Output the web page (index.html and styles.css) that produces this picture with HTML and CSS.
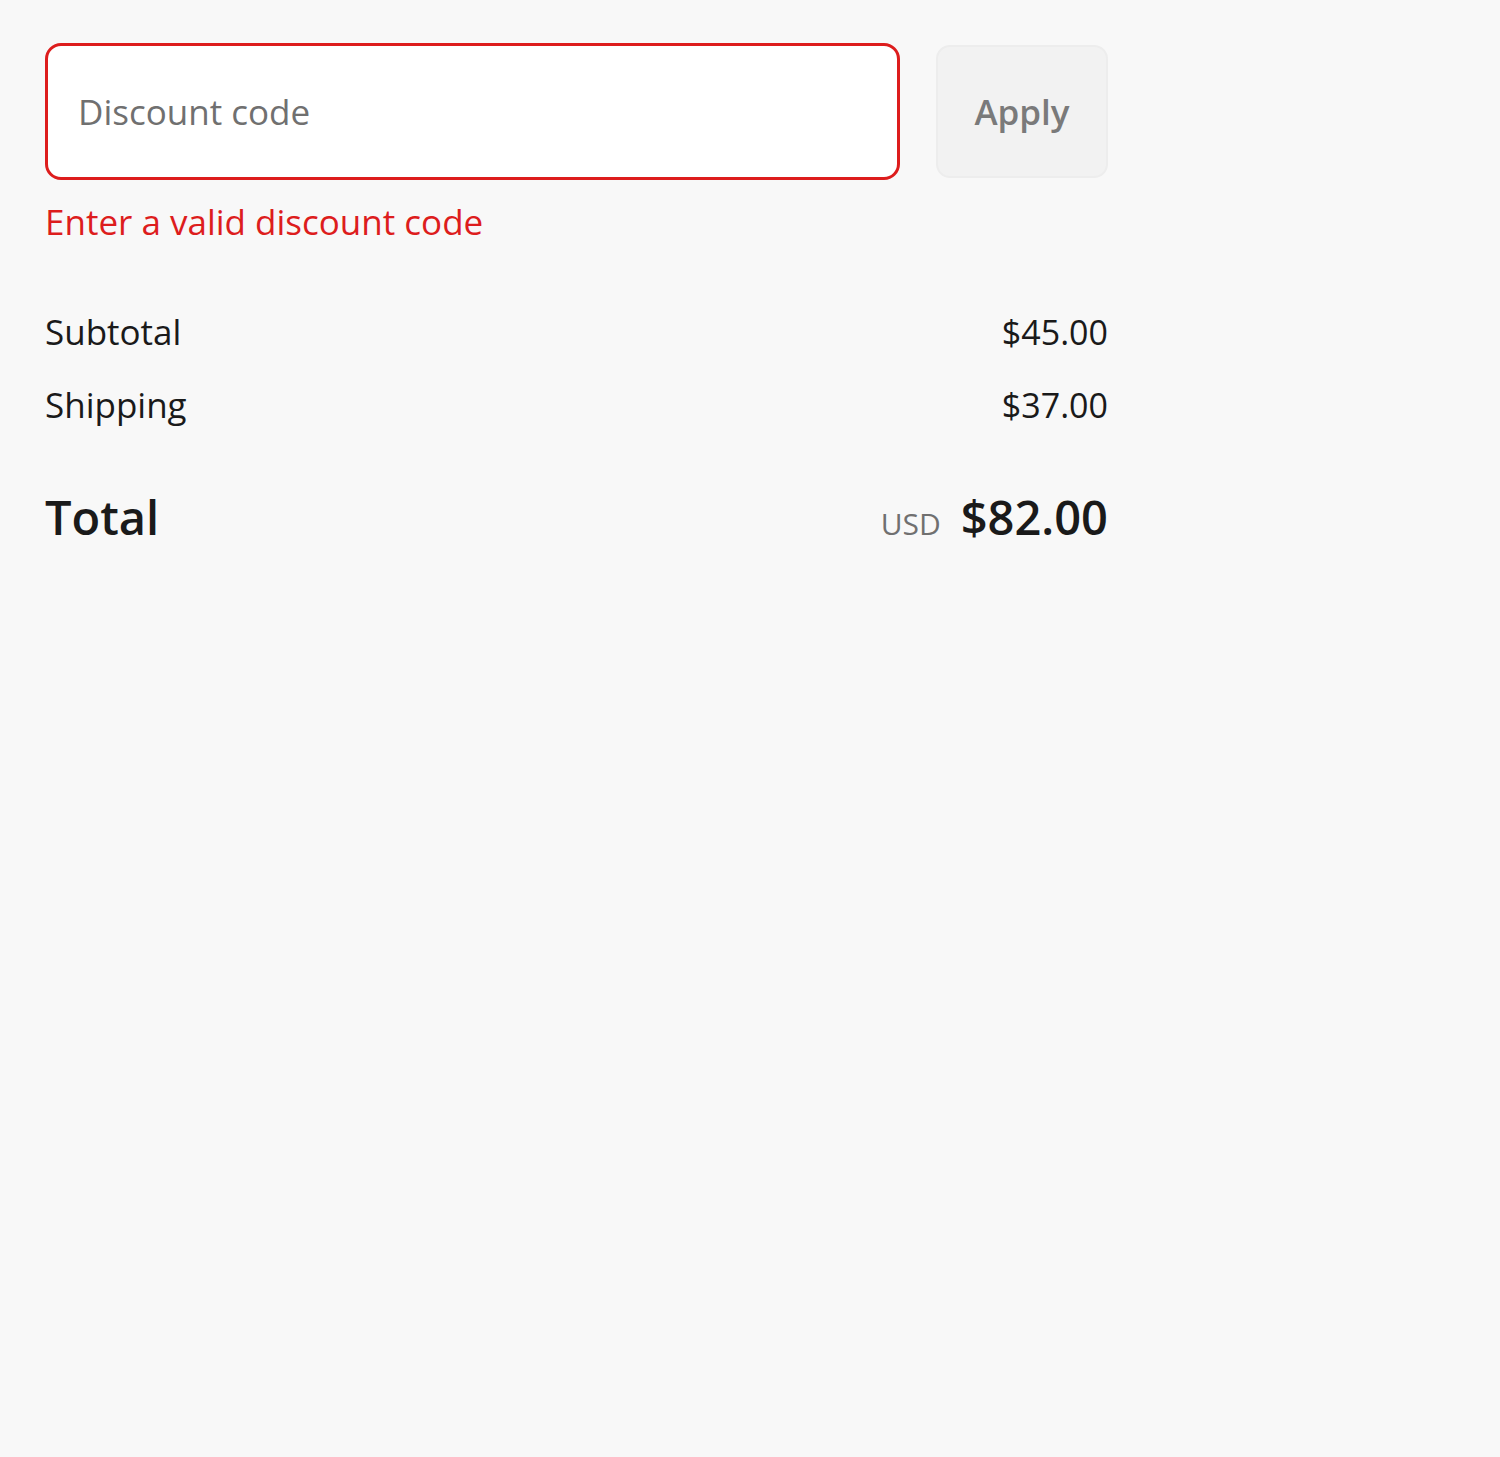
FILE: index.html
```html
<!DOCTYPE html>
<html lang="en">
<head>
    <meta charset="UTF-8">
    <meta name="viewport" content="width=device-width, initial-scale=1.0">
    <title>Order summary</title>
    <link rel="stylesheet" href="styles.css">
</head>
<body>
    <div class="summary">
        <form class="discount-form">
            <div class="discount-row">
                <input type="text" class="discount-input" placeholder="Discount code">
                <button type="submit" class="apply-btn" disabled>Apply</button>
            </div>
            <div class="field-error">Enter a valid discount code</div>
        </form>

        <div class="totals">
            <div class="line">
                <span>Subtotal</span>
                <span class="price">$45.00</span>
            </div>
            <div class="line">
                <span>Shipping</span>
                <span class="price">$37.00</span>
            </div>
            <div class="line total">
                <span>Total</span>
                <span class="amount"><span class="currency">USD</span>$82.00</span>
            </div>
        </div>
    </div>
</body>
</html>
```

FILE: styles.css
```css
body {
    margin: 0;
    background-color: #f8f8f8;
    font-family: "Open Sans", "Noto Sans", Arial, sans-serif;
    color: #1a1a1a;
}
.summary {
    width: 1063px;
    padding: 43px 0 0 45px;
}
.discount-row {
    display: flex;
    gap: 36px;
    align-items: center;
}
.discount-input {
    flex: 1;
    height: 137px;
    box-sizing: border-box;
    padding: 0 30px;
    border: 3px solid #dd1d1d;
    border-radius: 16px;
    background-color: white;
    font-family: inherit;
    font-size: 35px;
    color: #1a1a1a;
    outline: none;
}
.discount-input::placeholder {
    color: #707070;
}
.apply-btn {
    width: 172px;
    height: 133px;
    border: 2px solid #ededed;
    border-radius: 14px;
    background-color: #f2f2f2;
    color: #7a7a7a;
    font-family: inherit;
    font-size: 35px;
    font-weight: 600;
}
.field-error {
    margin-top: 20px;
    color: #dd1d1d;
    font-size: 35px;
    line-height: 44px;
}
.totals {
    margin-top: 66px;
}
.line {
    display: flex;
    justify-content: space-between;
    align-items: baseline;
    font-size: 35px;
    line-height: 44px;
    margin-bottom: 29px;
}
.price {
    font-size: 34px;
}
.line.total {
    margin-top: 60px;
    font-size: 47px;
    font-weight: 600;
    line-height: 60px;
}
.currency {
    margin-right: 20px;
    font-size: 30px;
    font-weight: 400;
    color: #707070;
}
```
